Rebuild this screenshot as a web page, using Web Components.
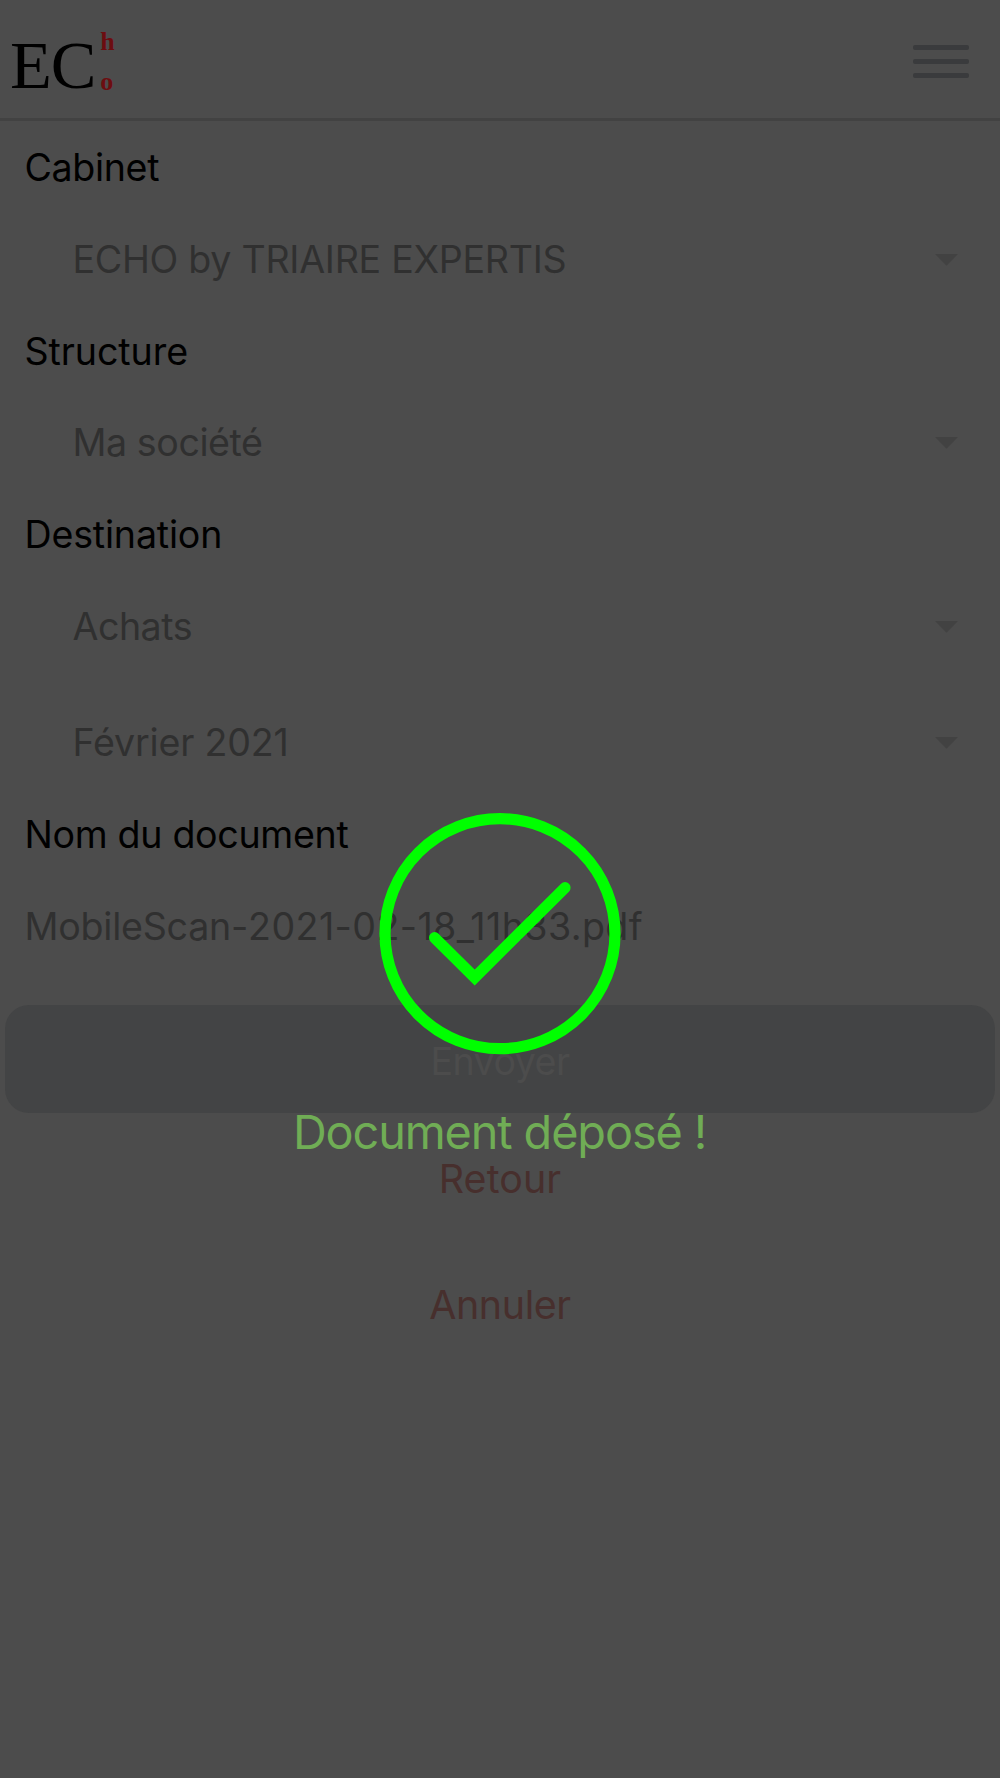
<!DOCTYPE html>
<html lang="fr">
<head>
<meta charset="utf-8">
<title>ECHO</title>
<style>
html,body{margin:0;height:100%;background:#4c4c4c}
body{font-family:Inter,"Liberation Sans",sans-serif;font-size:37.6px;color:#000;overflow:hidden}
</style>
</head>
<body>
<echo-app></echo-app>
<script>
const define = (name, html) => {
  const t = document.createElement('template');
  t.innerHTML = html;
  customElements.define(name, class extends HTMLElement {
    constructor() {
      super();
      this.attachShadow({mode: 'open'}).appendChild(t.content.cloneNode(true));
    }
  });
};

define('echo-logo', `<style>
:host{display:flex;font-family:"Liberation Serif",serif;color:#000}
.ec{font-size:68.5px;line-height:78px;letter-spacing:-1.2px;height:78px}
.ho{display:flex;flex-direction:column;font-size:26px;font-weight:700;line-height:39px;gap:1px;color:#6c0d10;margin:-4px 0 0 5px}
</style><span class="ec">EC</span><span class="ho"><span>h</span><span>o</span></span>`);

define('menu-button', `<style>
:host{display:flex;flex-direction:column;gap:9px;width:56px}
i{height:5px;border-radius:2px;background:#3a3b3d}
</style><i></i><i></i><i></i>`);

define('app-header', `<style>
:host{display:flex;justify-content:space-between;box-sizing:border-box;height:121px;padding:0 31px 0 10px;border-bottom:3px solid #424242}
echo-logo{margin-top:26px}
menu-button{margin-top:45px}
</style><echo-logo></echo-logo><menu-button></menu-button>`);

define('field-label', `<style>
:host{display:block;height:91.8px;line-height:91.8px;padding-left:24.5px;white-space:nowrap;color:#000}
</style><slot></slot>`);

define('select-field', `<style>
:host{display:flex;align-items:center;justify-content:space-between;height:91.8px;line-height:91.8px;padding:0 41.6px 0 72.5px;white-space:nowrap;color:#303030}
svg{display:block;width:23px;height:12px;fill:#424242}
</style><span><slot></slot></span><svg viewBox="0 0 23 12"><path d="M0 0H23L11.5 11.7Z"/></svg>`);

define('text-field', `<style>
:host{display:block;height:91.8px;line-height:91.8px;padding-left:24.5px;white-space:nowrap;color:#303030}
</style><slot></slot>`);

define('primary-button', `<style>
:host{display:flex;align-items:center;justify-content:center;box-sizing:border-box;height:108.6px;padding-top:5px;margin:32.5px 5px 0;border-radius:24px;background:#434445;color:#4c4c4c}
</style><slot></slot>`);

define('link-button', `<style>
:host{display:flex;align-items:center;justify-content:center;height:126px;font-size:39.4px;color:#472f2d}
</style><slot></slot>`);

define('success-overlay', `<style>
:host{position:absolute;inset:0;display:flex;flex-direction:column;align-items:center;padding-top:813px;box-sizing:border-box}
svg{display:block;width:242px;height:242px;fill:none;stroke:#0f0;stroke-width:11.2}
.msg{font-size:46.8px;line-height:60px;letter-spacing:-1.1px;margin:47px 1px 0 0;color:#70ad55;white-space:nowrap}
</style><svg viewBox="0 0 242 242"><circle cx="121" cy="120.7" r="115"/><path d="M55.6 124.7L95.7 164.5L186 74.7" stroke-linecap="round"/></svg><div class="msg"><slot></slot></div>`);

define('echo-app', `<style>
:host{display:block;position:relative;width:1000px;height:1778px;overflow:hidden;background:#4c4c4c}
main{display:flex;flex-direction:column;padding-top:1px}
.spaced{margin-top:24.2px}
.links{margin-top:3px}
</style>
<app-header></app-header>
<main>
<field-label style="letter-spacing:-.35px">Cabinet</field-label>
<select-field style="letter-spacing:-.28px">ECHO by TRIAIRE EXPERTIS</select-field>
<field-label style="letter-spacing:-.08px">Structure</field-label>
<select-field style="letter-spacing:-.42px">Ma société</select-field>
<field-label style="letter-spacing:-.18px">Destination</field-label>
<select-field style="letter-spacing:-.5px">Achats</select-field>
<select-field class="spaced" style="letter-spacing:-.18px">Février 2021</select-field>
<field-label style="letter-spacing:-.32px">Nom du document</field-label>
<text-field style="letter-spacing:.41px"><span style="letter-spacing:-.23px">MobileScan-</span>2021-02-18_11h33.pdf</text-field>
<primary-button style="letter-spacing:-.55px">Envoyer</primary-button>
<div class="links"><link-button style="letter-spacing:.1px">Retour</link-button><link-button style="letter-spacing:-.4px">Annuler</link-button></div>
</main>
<success-overlay>Document déposé !</success-overlay>`);
</script>
</body>
</html>
